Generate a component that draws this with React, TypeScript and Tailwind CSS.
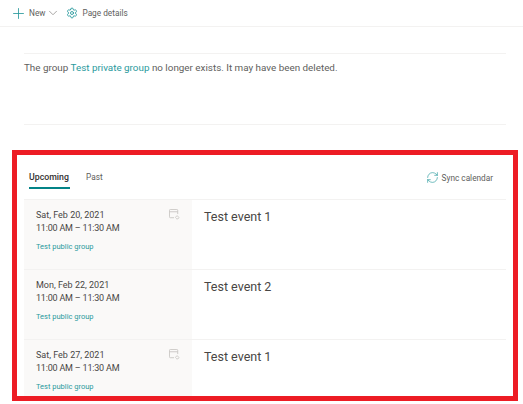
import React from 'react';
import { ChevronDown, Plus, RefreshCw, Settings } from 'lucide-react';

const events = [
  { date: 'Sat, Feb 20, 2021', title: 'Test event 1', recurring: true },
  { date: 'Mon, Feb 22, 2021', title: 'Test event 2', recurring: false },
  { date: 'Sat, Feb 27, 2021', title: 'Test event 1', recurring: true },
];

function SeriesIcon() {
  return (
    <svg width="11" height="11" viewBox="0 0 12 12" fill="none" stroke="#c8c6c4" strokeWidth="1" className="shrink-0">
      <path d="M5.5 9.5H1.5a1 1 0 0 1-1-1v-7a1 1 0 0 1 1-1h7a1 1 0 0 1 1 1v4" />
      <path d="M.5 3h9" />
      <path d="M7 9.5a2 2 0 0 1 3.4-1.2M11 9a2 2 0 0 1-3.4 1.2" />
    </svg>
  );
}

function EventRow({ date, title, recurring }: { date: string; title: string; recurring: boolean }) {
  return (
    <div className="flex h-[70px] shrink-0 border-b border-[#f3f2f1]">
      <div className="flex w-[168px] shrink-0 justify-between bg-[#faf9f8] pl-3 pr-[12px] pt-[9px]">
        <div>
          <div className="text-[9px] leading-[13px] text-[#484644]">{date}</div>
          <div className="text-[9px] leading-[13px] tracking-[-0.2px] text-[#484644]">11:00 AM – 11:30 AM</div>
          <div className="mt-[6px] text-[7.5px] leading-[11px] text-[#2a9a9d]">Test public group</div>
        </div>
        {recurring && <SeriesIcon />}
      </div>
      <div className="pl-3 pt-[7px] text-[12.5px] leading-[19px] text-[#484644]">{title}</div>
    </div>
  );
}

export default function App() {
  return (
    <div className="h-[404px] w-[523px] overflow-hidden bg-white font-['Roboto',sans-serif]">
      <div className="flex h-[27px] items-center border-b border-[#f3f2f1] pl-[10px] text-[8.25px] text-[#605e5c]">
        <Plus size={17} strokeWidth={1.2} className="text-[#2a9a9d]" />
        <span className="ml-[2px]">New</span>
        <ChevronDown size={14} strokeWidth={1.6} className="ml-[1px] text-[#a19f9d]" />
        <Settings size={12} strokeWidth={1.8} className="ml-[6px] text-[#2a9a9d]" />
        <span className="ml-[4px]">Page details</span>
      </div>

      <div className="ml-6 mr-[17px] mt-[26px] h-[72px] border-y border-[#f3f2f1] pt-[7px] text-[9.85px] leading-[13px] text-[#605e5c]">
        The group <span className="text-[#2a9a9d]">Test private group</span> no longer exists. It may have been deleted.
      </div>

      <div className="ml-3 mt-[25px] h-[251px] w-[506px] overflow-hidden border-[5px] border-[#ed1c24] px-[7px] pt-4">
        <div className="flex h-[29px] items-start justify-between border-b border-[#f3f2f1] pl-[5px] pr-[13px]">
          <div className="flex gap-[16px]">
            <div className="h-[18px] w-[41px] border-b-2 border-[#038387] text-[8.75px] leading-[12px] font-medium text-[#323130]">Upcoming</div>
            <div className="text-[8.25px] leading-[12px] text-[#605e5c]">Past</div>
          </div>
          <div className="flex items-center gap-[3px] text-[8.25px] leading-[12px] text-[#605e5c]">
            <RefreshCw size={13} strokeWidth={1.2} className="text-[#2a9a9d]" />
            Sync calendar
          </div>
        </div>
        {events.map((event) => (
          <EventRow key={event.date} {...event} />
        ))}
      </div>
    </div>
  );
}
